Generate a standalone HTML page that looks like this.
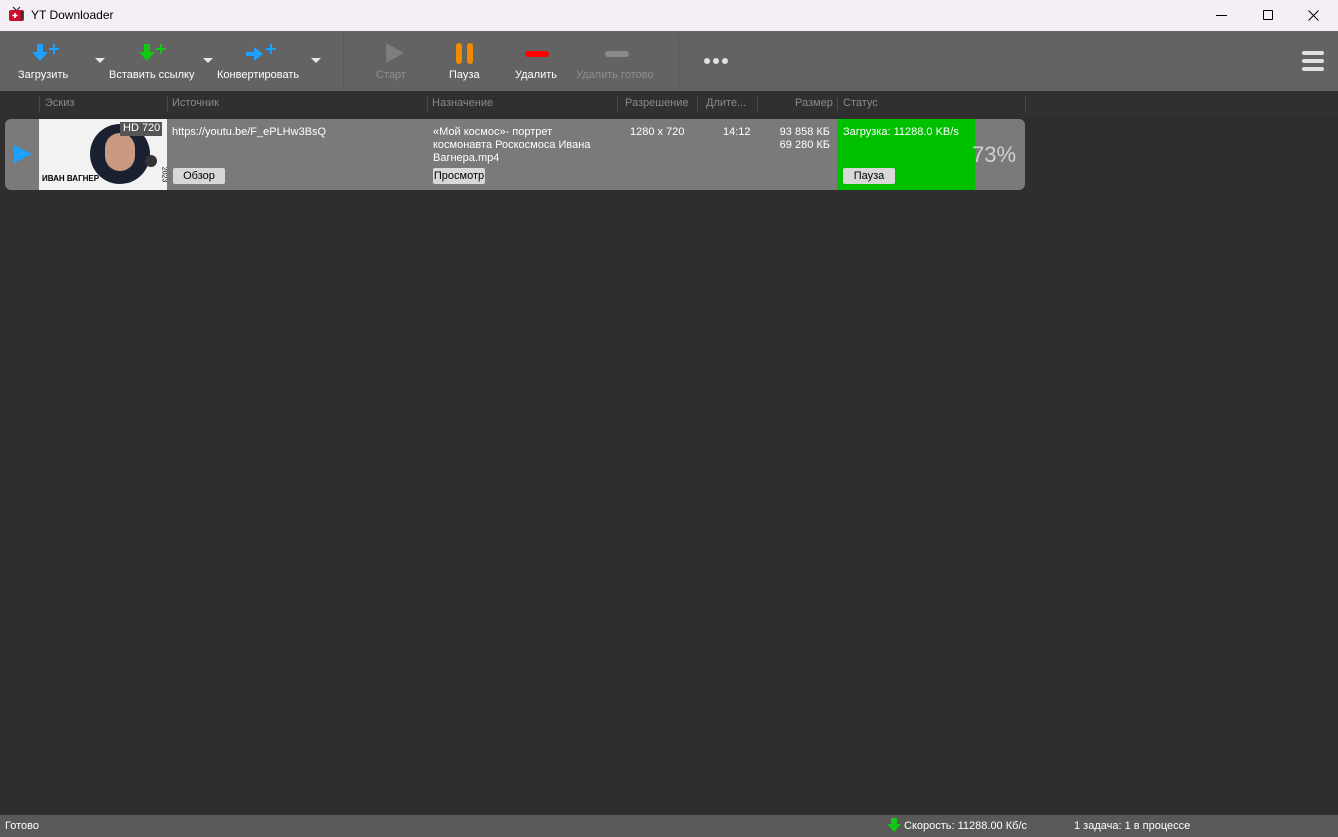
<!DOCTYPE html><html><head><meta charset="utf-8"><style>
*{margin:0;padding:0;box-sizing:border-box}
body{width:1338px;height:837px;overflow:hidden;background:#2e2e2e;font-family:"Liberation Sans","Noto Sans CJK SC",sans-serif;position:relative;font-size:11px;color:#fff}
.a{position:absolute}
.tb{left:0;top:0;width:1338px;height:31px;background:#f4eff5;color:#000;font-size:12px}
.tool{left:0;top:31px;width:1338px;height:60px;background:#636363}
.lbl{font-size:11px;color:#fff;white-space:nowrap}
.hdr{top:91px;left:0;width:1338px;height:24px;background:#303030;color:#8a8a8a;font-size:11px}
.sep{width:1px;height:14px;background:#4a4a4a;top:97px}
.btn{background:#d8d8d8;color:#000;border-radius:2px;font-size:11px;text-align:center;line-height:16px;height:16px}
</style></head><body>
<div class="a tb">
 <svg class="a" style="left:8px;top:6px" width="17" height="17" viewBox="0 0 17 17"><path d="M5 1l3 3M12 1l-3 3" stroke="#222" stroke-width="1.2"/><rect x="1" y="4" width="15" height="11" rx="2" fill="#c8102e"/><rect x="13" y="5" width="2" height="9" fill="#333"/><path d="M7 7v5M4.5 9.5h5" stroke="#fff" stroke-width="1.6"/></svg>
 <div class="a" style="left:31px;top:8px">YT Downloader</div>
 <div class="a" style="left:1216px;top:15px;width:11px;height:1px;background:#000"></div>
 <div class="a" style="left:1263px;top:10px;width:10px;height:10px;border:1px solid #000;border-radius:1px"></div>
 <svg class="a" style="left:1308px;top:10px" width="11" height="11"><path d="M0.5 0.5l10 10M10.5 0.5l-10 10" stroke="#000" stroke-width="1"/></svg>
</div>
<div class="a tool">
 <div class="a" style="left:343px;top:2px;width:1px;height:56px;background:#585858"></div>
 <div class="a" style="left:678px;top:2px;width:1px;height:56px;background:#585858"></div>
 <svg class="a" style="left:30px;top:12px" width="34" height="24"><path d="M7 1h6v8h5l-8 9-8-9h5z" fill="#1ea0ff"/><path d="M24 1v10M19 6h10" stroke="#1ea0ff" stroke-width="2"/></svg>
 <div class="a lbl" style="left:18px;top:38px">Загрузить</div>
 <div class="a" style="left:95px;top:27px;border:5px solid transparent;border-top-color:#e8e8e8"></div>
 <svg class="a" style="left:137px;top:12px" width="34" height="24"><path d="M7 1h6v8h5l-8 9-8-9h5z" fill="#12c812"/><path d="M24 1v10M19 6h10" stroke="#12c812" stroke-width="2"/></svg>
 <div class="a lbl" style="left:109px;top:38px">Вставить ссылку</div>
 <div class="a" style="left:203px;top:27px;border:5px solid transparent;border-top-color:#e8e8e8"></div>
 <svg class="a" style="left:245px;top:12px" width="34" height="24"><path d="M1 9h8v-5l9 7-9 7v-5h-8z" fill="#1ea0ff"/><path d="M26 1v10M21 6h10" stroke="#1ea0ff" stroke-width="2"/></svg>
 <div class="a lbl" style="left:217px;top:38px">Конвертировать</div>
 <div class="a" style="left:311px;top:27px;border:5px solid transparent;border-top-color:#e8e8e8"></div>
 <svg class="a" style="left:385px;top:11px" width="20" height="22"><path d="M1 1l18 10-18 10z" fill="#7d7d7d"/></svg>
 <div class="a lbl" style="left:376px;top:38px;color:#8e8e8e">Старт</div>
 <div class="a" style="left:456px;top:12px;width:6px;height:21px;background:#f08a00;border-radius:3px"></div>
 <div class="a" style="left:467px;top:12px;width:6px;height:21px;background:#f08a00;border-radius:3px"></div>
 <div class="a lbl" style="left:449px;top:38px">Пауза</div>
 <div class="a" style="left:525px;top:20px;width:24px;height:6px;background:#f00;border-radius:3px"></div>
 <div class="a lbl" style="left:515px;top:38px">Удалить</div>
 <div class="a" style="left:605px;top:20px;width:24px;height:6px;background:#8a8a8a;border-radius:3px"></div>
 <div class="a lbl" style="left:576px;top:38px;color:#8e8e8e">Удалить готово</div>
 <div class="a" style="left:704px;top:27px;width:6px;height:6px;border-radius:3px;background:#e0e0e0;box-shadow:9px 0 #e0e0e0,18px 0 #e0e0e0"></div>
 <div class="a" style="left:1302px;top:20px;width:22px;height:4px;border-radius:2px;background:#e0e0e0;box-shadow:0 8px #e0e0e0,0 16px #e0e0e0"></div>
</div>
<div class="a hdr">
 <div class="a" style="left:45px;top:6px">Эскиз</div>
 <div class="a" style="left:172px;top:6px">Источник</div>
 <div class="a" style="left:432px;top:6px">Назначение</div>
 <div class="a" style="left:625px;top:6px">Разрешение</div>
 <div class="a" style="left:706px;top:6px">Длите...</div>
 <div class="a" style="left:795px;top:6px">Размер</div>
 <div class="a" style="left:843px;top:6px">Статус</div>
</div>
<div class="a sep" style="left:39px"></div><div class="a sep" style="left:167px"></div><div class="a sep" style="left:427px"></div><div class="a sep" style="left:617px"></div><div class="a sep" style="left:697px"></div><div class="a sep" style="left:757px"></div><div class="a sep" style="left:837px"></div><div class="a sep" style="left:1025px"></div>
<div class="a" style="left:5px;top:119px;width:1020px;height:71px;background:#7a7a7a;border-radius:6px"></div>
<svg class="a" style="left:13px;top:144px" width="20" height="20"><path d="M1 1l18 9-18 9z" fill="#1ea0ff"/></svg>
<div class="a" style="left:39px;top:119px;width:128px;height:71px;background:#f2f2f2;overflow:hidden">
 <div class="a" style="left:51px;top:5px;width:60px;height:60px;border-radius:30px;background:#1a2030"></div>
 <div class="a" style="left:66px;top:14px;width:30px;height:38px;border-radius:15px;background:#c99a80"></div>
 <div class="a" style="left:106px;top:36px;width:12px;height:12px;border-radius:6px;background:#333"></div>
 <div class="a" style="left:81px;top:3px;width:42px;height:14px;background:#555;color:#fff;font-size:11px;padding-left:3px">HD 720</div>
 <div class="a" style="left:3px;top:55px;color:#000;font-size:8px;font-weight:bold">ИВАН ВАГНЕР</div>
 <div class="a" style="left:117px;top:52px;color:#000;font-size:7px;transform:rotate(90deg)">2023</div>
</div>
<div class="a" style="left:172px;top:126px">https://youtu.be/F_ePLHw3BsQ</div>
<div class="a btn" style="left:173px;top:168px;width:52px">Обзор</div>
<div class="a" style="left:433px;top:126px;line-height:13px">«Мой космос»- портрет<br>космонавта Роскосмоса Ивана<br>Вагнера.mp4</div>
<div class="a btn" style="left:433px;top:168px;width:52px">Просмотр</div>
<div class="a" style="left:630px;top:126px">1280 x 720</div>
<div class="a" style="left:723px;top:126px">14:12</div>
<div class="a" style="left:760px;top:126px;width:70px;text-align:right;line-height:13px">93 858 КБ<br>69 280 КБ</div>
<div class="a" style="left:837px;top:119px;width:138px;height:71px;background:#00c000"></div>
<div class="a" style="left:843px;top:126px">Загрузка: 11288.0 KB/s</div>
<div class="a btn" style="left:843px;top:168px;width:52px">Пауза</div>
<div class="a" style="left:972px;top:142px;font-size:22px;color:#d0d0d0">73%</div>
<div class="a" style="left:0;top:815px;width:1338px;height:22px;background:#595959"></div>
<div class="a" style="left:5px;top:820px">Готово</div>
<svg class="a" style="left:887px;top:818px" width="14" height="15"><path d="M4 0h6v6h4l-7 8-7-8h4z" fill="#12c812"/></svg>
<div class="a" style="left:904px;top:820px">Скорость: 11288.00 Кб/с</div>
<div class="a" style="left:1074px;top:820px">1 задача: 1 в процессе</div>
</body></html>
